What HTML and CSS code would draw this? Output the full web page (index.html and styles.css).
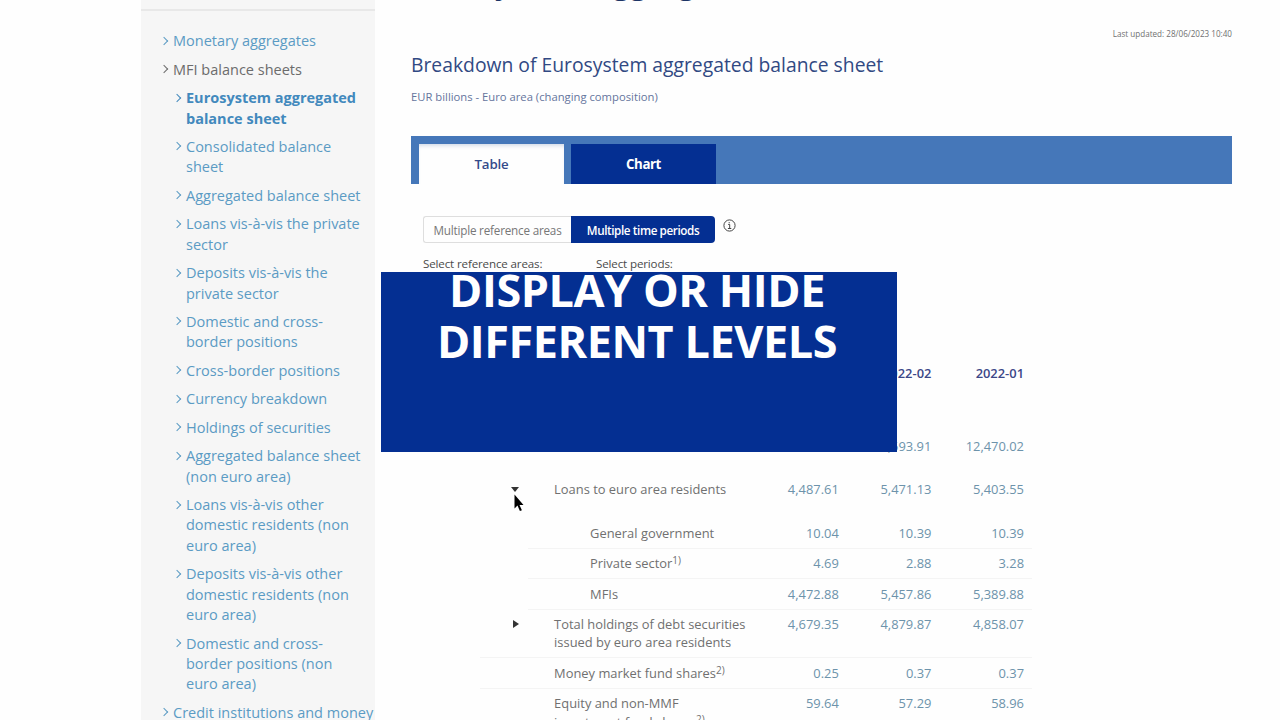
FILE: index.html
```
<!DOCTYPE html>
<html lang="en">
<head>
    <meta charset="UTF-8">
    <meta name="viewport" content="width=device-width, initial-scale=1.0">
    <title>Eurosystem aggregated balance sheet</title>
    <link rel="stylesheet" href="styles.css">
</head>
<body>
    <div class="page">
        <nav class="sidebar">
            <div class="sidebar-top"></div>
            <ul class="menu">
                <li><a href="#">Monetary aggregates</a></li>
                <li class="open"><a href="#">MFI balance sheets</a>
                    <ul class="submenu">
                        <li class="active"><a href="#">Eurosystem aggregated balance sheet</a></li>
                        <li><a href="#">Consolidated balance sheet</a></li>
                        <li><a href="#">Aggregated balance sheet</a></li>
                        <li><a href="#">Loans vis-à-vis the private sector</a></li>
                        <li><a href="#">Deposits vis-à-vis the private sector</a></li>
                        <li><a href="#">Domestic and cross-border positions</a></li>
                        <li><a href="#">Cross-border positions</a></li>
                        <li><a href="#">Currency breakdown</a></li>
                        <li><a href="#">Holdings of securities</a></li>
                        <li><a href="#">Aggregated balance sheet (non euro area)</a></li>
                        <li><a href="#">Loans vis-à-vis other domestic residents (non euro area)</a></li>
                        <li><a href="#">Deposits vis-à-vis other domestic residents (non euro area)</a></li>
                        <li><a href="#">Domestic and cross-border positions (non euro area)</a></li>
                    </ul>
                </li>
                <li><a href="#">Credit institutions and money</a></li>
            </ul>
        </nav>
        <main class="content">
            <h1>Eurosystem aggregated balance sheet</h1>
            <p class="updated">Last updated: 28/06/2023 10:40</p>
            <h2>Breakdown of Eurosystem aggregated balance sheet</h2>
            <p class="unit">EUR billions - Euro area (changing composition)</p>
            <div class="tabs">
                <button class="tab selected">Table</button>
                <button class="tab">Chart</button>
            </div>
            <div class="panel">
                <div class="switch">
                    <button class="areas">Multiple reference areas</button>
                    <button class="periods">Multiple time periods</button>
                    <svg class="info" width="13" height="13" viewBox="0 0 13 13" fill="none" stroke="#444">
                        <circle cx="6.5" cy="6.5" r="5.6"/>
                        <path d="M5.2 5.5h1.5v3.9M4.9 9.5h3.4M6.2 3.1v1.2"/>
                    </svg>
                </div>
                <div class="labels">
                    <span>Select reference areas:</span>
                    <span>Select periods:</span>
                </div>
                <table>
                    <thead>
                        <tr><th></th><th></th><th></th><th>2022-02</th><th>2022-01</th></tr>
                    </thead>
                    <tbody>
                        <tr class="total"><td></td><td></td><td></td><td>12,593.91</td><td>12,470.02</td></tr>
                        <tr class="group"><td><i class="arrow down"></i></td><td>Loans to euro area residents</td><td>4,487.61</td><td>5,471.13</td><td>5,403.55</td></tr>
                        <tr class="sub"><td></td><td>General government</td><td>10.04</td><td>10.39</td><td>10.39</td></tr>
                        <tr class="sub"><td></td><td>Private sector<sup>1)</sup></td><td>4.69</td><td>2.88</td><td>3.28</td></tr>
                        <tr class="sub"><td></td><td>MFIs</td><td>4,472.88</td><td>5,457.86</td><td>5,389.88</td></tr>
                        <tr><td><i class="arrow right"></i></td><td>Total holdings of debt securities issued by euro area residents</td><td>4,679.35</td><td>4,879.87</td><td>4,858.07</td></tr>
                        <tr><td></td><td>Money market fund shares<sup>2)</sup></td><td>0.25</td><td>0.37</td><td>0.37</td></tr>
                        <tr><td></td><td>Equity and non-MMF<br>investment fund shares<sup>2)</sup></td><td>59.64</td><td>57.29</td><td>58.96</td></tr>
                    </tbody>
                </table>
            </div>
        </main>
    </div>
    <div class="caption"><p>DISPLAY OR HIDE<br>DIFFERENT LEVELS</p></div>
    <svg class="cursor" width="10" height="18" viewBox="0 0 10 18">
        <path d="M.5 .5v14l3-3 2.4 5.6 2-.9-2.4-5.3h4z"/>
    </svg>
</body>
</html>
```
FILE: styles.css
```
:root {
    --blue: #042f92;
    --light-blue: #4577b9;
    --link: #5b9bc4;
    --text: #707070;
    --line: #f4f4f4;
}
* {
    box-sizing: border-box;
}
body {
    margin: 0;
    height: 720px;
    overflow: hidden;
    background: #fefefe;
    color: var(--text);
    font-family: "Open Sans", sans-serif;
    position: relative;
}
.page {
    display: flex;
    height: 720px;
    padding-left: 141px;
    overflow: hidden;
}
/* left navigation */
.sidebar {
    width: 234px;
    flex: none;
    background: #f6f6f6;
}
.sidebar-top {
    height: 11px;
    border-bottom: 2px solid #e8e8e8;
}
.sidebar ul {
    list-style: none;
    margin: 0;
    padding: 0;
}
.sidebar .menu {
    padding: 20.2px 0 0 32px;
    font-size: 14.5px;
    line-height: 20.4px;
}
.sidebar li {
    margin-bottom: 8.05px;
}
.sidebar a {
    display: block;
    position: relative;
    color: var(--link);
    text-decoration: none;
}
.sidebar a::before {
    content: "";
    position: absolute;
    left: -12.5px;
    top: 6.5px;
    width: 5px;
    height: 5px;
    border-top: 1px solid;
    border-right: 1px solid;
    transform: rotate(45deg);
}
.sidebar .open > a {
    color: #6c6c6c;
}
.sidebar .submenu {
    padding: 8.05px 12px 0 13px;
}
.sidebar .active a {
    color: #4289bd;
    font-weight: bold;
}
/* main column */
.content {
    width: 821px;
    margin-left: 36px;
    flex: none;
}
h1 {
    margin: -39px 0 0;
    font-size: 30px;
    line-height: 44px;
    color: #1d3566;
}
.updated {
    margin: 23px 0 0;
    font-size: 8.1px;
    line-height: 12px;
    text-align: right;
}
h2 {
    margin: 11px 0 0;
    font-size: 19.32px;
    line-height: 27px;
    font-weight: normal;
    color: #314983;
}
.unit {
    margin: 11px 0 0;
    font-size: 11.25px;
    line-height: 16px;
    color: #65759d;
}
.tabs {
    display: flex;
    gap: 7px;
    height: 48px;
    margin-top: 31px;
    padding: 8px 8px 0;
    background: var(--light-blue);
}
button {
    font-family: inherit;
    border: 0;
    padding: 0;
}
.tab {
    width: 145px;
    background: var(--blue);
    color: #fff;
    font-size: 13.3px;
    font-weight: bold;
    letter-spacing: -0.45px;
}
.tab.selected {
    background: #fefefe;
    color: #344b8a;
    font-weight: 600;
    letter-spacing: -0.2px;
    box-shadow: inset 0 4px 5px -3px #c5cfe0;
}
.panel {
    padding: 32px 12px 0;
}
.switch {
    display: flex;
}
.switch button {
    height: 27px;
    font-size: 11.7px;
    letter-spacing: -0.2px;
}
.switch .areas {
    width: 148px;
    border: 1px solid #dedede;
    border-right: 0;
    border-radius: 3px 0 0 3px;
    background: #fefefe;
    color: #777;
}
.switch .periods {
    width: 144px;
    border-radius: 0 4px 4px 0;
    background: var(--blue);
    color: #fff;
    font-size: 11.7px;
    font-weight: 600;
    letter-spacing: -0.4px;
}
.info {
    margin: 3px 0 0 8px;
}
.labels {
    display: flex;
    margin-top: 11.5px;
    font-size: 11.6px;
    line-height: 18px;
    letter-spacing: -0.15px;
    color: #4a4a4a;
}
.labels span {
    width: 173px;
}
table {
    width: 609px;
    margin-top: 86.5px;
    table-layout: fixed;
    border-collapse: separate;
    border-spacing: 0;
    font-size: 12.9px;
    line-height: 18.4px;
}
th, td {
    padding: 5.4px 8px 5.6px 0;
    vertical-align: top;
    text-align: right;
    border-bottom: 1px solid var(--line);
}
th {
    height: 72.5px;
    border: 0;
    color: #3c4788;
    font-weight: 600;
    width: 92.5px;
}
th:first-child {
    width: 131px;
}
th:nth-child(2) {
    width: 200px;
}
td {
    color: #6d93ab;
}
/* the row line starts a bit left of the arrow */
td:first-child {
    padding-right: 35px;
    border-image: linear-gradient(to right, transparent 57px, var(--line) 57px) 1;
}
.sub td:first-child {
    border-image: linear-gradient(to right, transparent 104px, var(--line) 104px) 1;
}
td:nth-child(2) {
    text-align: left;
    color: var(--text);
    padding-right: 0;
}
.total td, .group td {
    height: 43.5px;
    border: 0;
}
.sub td:nth-child(2) {
    padding-left: 36px;
}
sup {
    font-size: 10px;
    line-height: 0;
    vertical-align: 4px;
}
.arrow {
    display: inline-block;
    border: 0 solid transparent;
}
.arrow.down {
    border-width: 5px 4px 0;
    border-top-color: #333;
    margin-bottom: 2px;
}
.arrow.right {
    border-width: 4px 0 4px 6px;
    border-left-color: #333;
    margin-bottom: 1px;
}
/* video caption and pointer on top of the page */
.caption {
    position: absolute;
    left: 381px;
    top: 272px;
    width: 516px;
    height: 179.5px;
    padding-right: 4px;
    background: var(--blue);
    color: #fff;
    font-size: 45px;
    line-height: 50.5px;
    letter-spacing: -0.45px;
    font-weight: bold;
    text-align: center;
    white-space: nowrap;
}
.caption p {
    margin: -7px 0 0;
}
.cursor {
    position: absolute;
    left: 514px;
    top: 494px;
}
```
